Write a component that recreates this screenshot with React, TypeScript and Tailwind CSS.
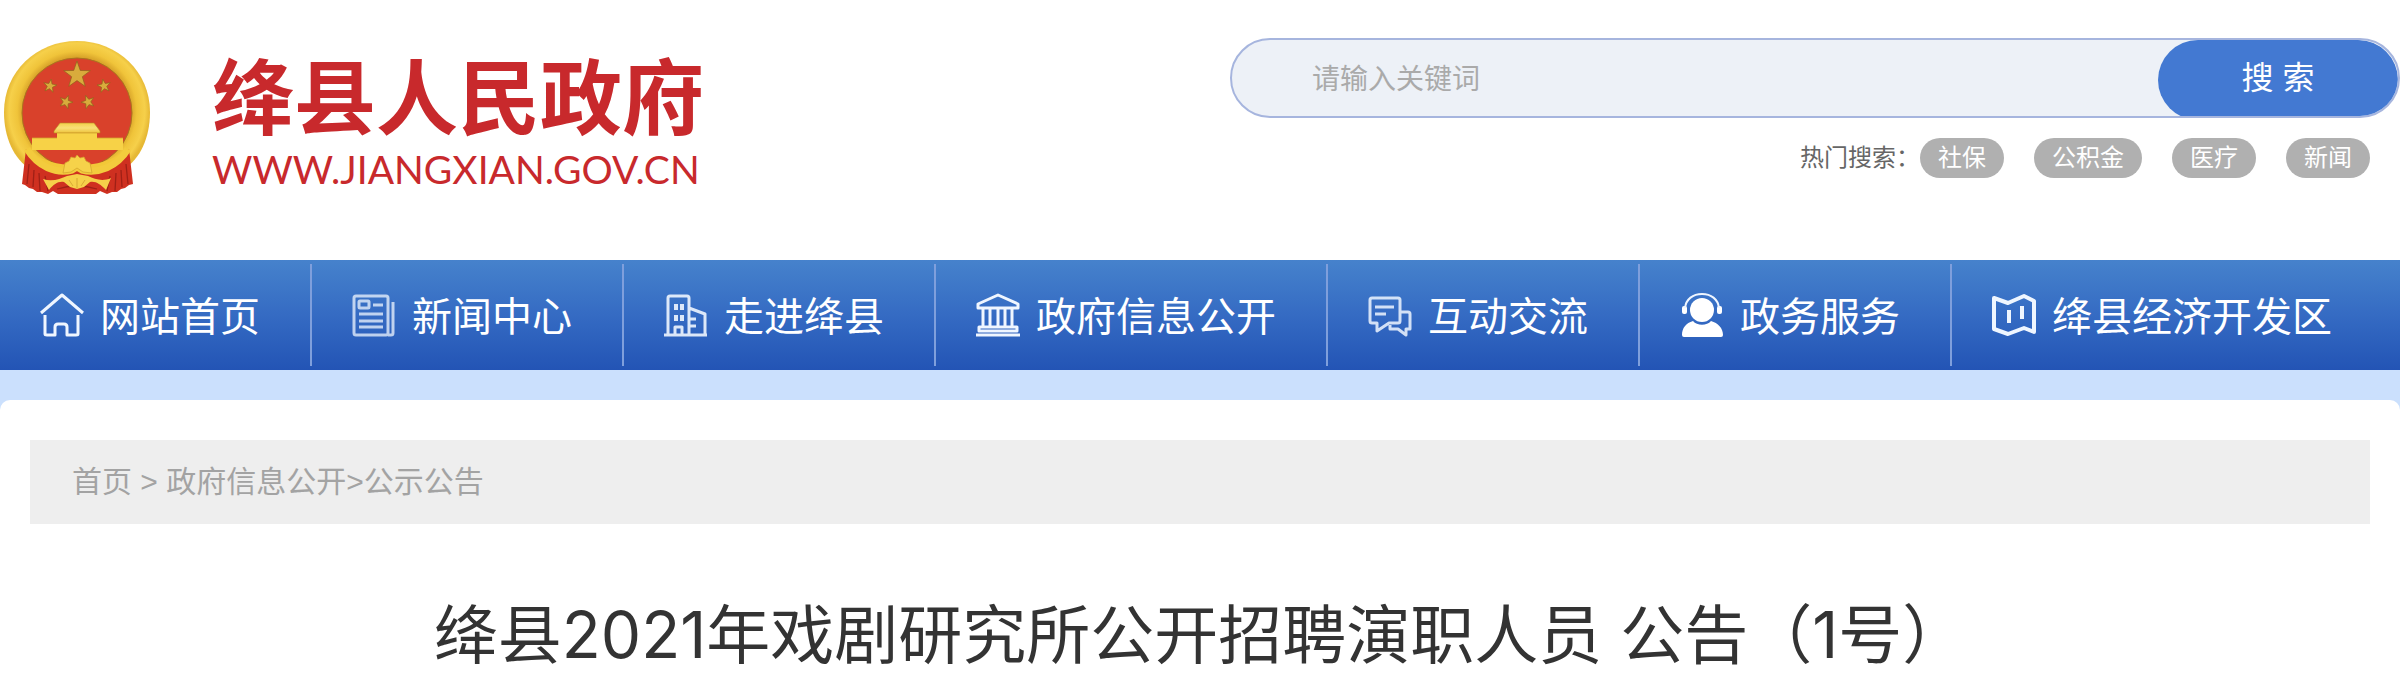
import type { ReactNode } from "react";

const hotWords = ["社保", "公积金", "医疗", "新闻"];

function star(cx: number, cy: number, r: number, turn = 0) {
  return Array.from({ length: 10 }, (_, i) => {
    const radius = i % 2 === 0 ? r : r * 0.4;
    const angle = ((i * 36 - 90 + turn) * Math.PI) / 180;
    return `${(cx + radius * Math.cos(angle)).toFixed(2)},${(cy + radius * Math.sin(angle)).toFixed(2)}`;
  }).join(" ");
}

function Emblem() {
  return (
    <svg className="h-[156px] w-[146px] shrink-0" viewBox="4 19 146 156" role="img" aria-label="国徽">
      <defs>
        <radialGradient id="ring" cx="77" cy="90" r="73" gradientUnits="userSpaceOnUse">
          <stop offset="0.74" stopColor="#d9a52a" />
          <stop offset="0.82" stopColor="#f0c43a" />
          <stop offset="0.93" stopColor="#f6d04a" />
          <stop offset="1" stopColor="#e6b834" />
        </radialGradient>
        <linearGradient id="roof" x1="0" y1="0" x2="0" y2="1">
          <stop offset="0" stopColor="#f3cf4a" />
          <stop offset="0.5" stopColor="#f8df78" />
          <stop offset="1" stopColor="#eec23a" />
        </linearGradient>
      </defs>
      <path
        d="M77 20C118 20 150 51 150 91C150 117 140 138 124 148L104 158H50L30 148C14 138 4 117 4 91C4 51 36 20 77 20Z"
        fill="url(#ring)"
      />
      <circle cx="77" cy="92" r="55" fill="#d9412b" stroke="#a8741f" strokeWidth="1" />
      <g fill="#d9ab3c" stroke="#8e641c" strokeWidth="0.7">
        <polygon points={star(77, 54, 14)} />
        <polygon points={star(50, 65, 7, 10)} />
        <polygon points={star(104, 65, 7, -10)} />
        <polygon points={star(66, 81, 7, 20)} />
        <polygon points={star(88, 81, 7, -20)} />
      </g>
      <path d="M60 102H94L100 110V112H54V110Z" fill="url(#roof)" stroke="#b98a25" strokeWidth="0.6" />
      <path d="M57 112H97V117H123V129H32V117H57Z" fill="#f7d247" />
      <path d="M32 117H57M97 117H123M57 112H97" stroke="#d3a22e" strokeWidth="0.8" />
      {/* lower ribbon and drapes */}
      <path d="M30 130C43 140 56 144 77 144S111 140 124 130L128 140C116 153 100 160 77 160S38 153 26 140Z" fill="#f2c838" />
      <path d="M26 128C34 145 50 151 68 153L77 148L86 153C104 151 120 145 129 128L133 163L129 164L125 167L121 168L117 171L112 171L107 173L100 170L96 173H58L53 170L48 173L42 171H37L33 168L29 167L25 164L22 163Z" fill="#cf3020" />
      <path d="M27 128C38 146 56 153 72 149L77 146L82 149C98 153 117 146 128 128" fill="none" stroke="#f3cb3d" strokeWidth="7" />
      <path
        d="M29 143L27 163M34 149L33 166M39 152L40 170M45 155L48 170M126 143L128 163M121 149L122 166M116 152L115 170M110 155L107 170M57 168Q77 162 97 168"
        stroke="#9f2016"
        strokeWidth="1.3"
        fill="none"
      />
      <path d="M63 152L65 142L69 140L71 136L75 137L77 134L80 137L84 136L86 140L90 142L92 152L83 151L77 147L71 151Z" fill="#f6d24a" stroke="#d2a02d" strokeWidth="0.7" />
      <path d="M43 158C52 161 60 158 67 155L77 153L88 155C95 158 102 161 111 157L106 169C100 163 96 160 90 161L84 166L77 168L70 166L64 161C58 160 54 163 49 169Z" fill="#f6d04a" />
      <path d="M69 159L73 165M77 157V167M85 159L81 165" stroke="#cf9f2f" strokeWidth="0.8" />
    </svg>
  );
}

function Icon({ children }: { children: ReactNode }) {
  return (
    <svg
      className="size-11 shrink-0 text-blue-50"
      viewBox="0 0 44 44"
      fill="none"
      stroke="currentColor"
      strokeWidth="3"
      strokeLinejoin="round"
      aria-hidden="true"
    >
      {children}
    </svg>
  );
}

const navItems = [
  {
    label: "网站首页",
    icon: <path d="M1 20L22 2L43 20M5 22V41Q5 42 7 42H15V34Q15 31 18 31H24Q27 31 27 34V42H36Q38 42 38 41V22" />,
  },
  {
    label: "新闻中心",
    icon: (
      <g opacity="0.75">
        <rect x="2" y="3" width="34" height="39" rx="2" />
        <path d="M36 42H39Q41 42 41 40V9" />
        <rect x="7" y="8" width="10" height="7" rx="1" />
        <path d="M21 12H31M7 21H31M7 28H31M7 34H31" />
      </g>
    ),
  },
  {
    label: "走进绛县",
    icon: (
      <g opacity="0.9">
        <path d="M0 42H43M4 42V5Q4 3 6 3H23Q25 3 25 5V42M25 15L41 21V42M11 42V34H18V42M25 26H32M25 33H32" />
        <path d="M12 11V17M18 11V17M12 22V28M18 22V28" strokeWidth="4" />
      </g>
    ),
  },
  {
    label: "政府信息公开",
    icon: (
      <path d="M2 15V11L22 2L42 11V15ZM7 16V33M14 16V33M22 16V33M29 16V33M36 16V33M3 34H41V38H3ZM0 42H44" />
    ),
  },
  {
    label: "互动交流",
    icon: (
      <path
        opacity="0.85"
        d="M4 5H30Q32 5 32 7V28Q32 30 30 30H21L9 38V30H4Q2 30 2 28V7Q2 5 4 5ZM7 14H26M7 21H18M33 19H40Q42 19 42 21V36H38V42L30 36H22V32"
      />
    ),
  },
  {
    label: "政务服务",
    icon: (
      <g>
        <g fill="white" stroke="none">
          <ellipse cx="22" cy="17" rx="12" ry="12" />
          <path d="M13 28C17 33 27 33 31 28C38 30 43 35 43 42Q43 44 41 44H4Q2 44 2 42C2 35 6 30 13 28Z" />
          <rect x="2" y="13" width="5" height="8" rx="2" />
          <rect x="37" y="13" width="5" height="8" rx="2" />
        </g>
        <path d="M5 15C6 6 13 1 22 1S38 6 39 15" strokeWidth="2" />
      </g>
    ),
  },
  {
    label: "绛县经济开发区",
    icon: <path d="M2 5L16 10L32 3L42 8V39L32 35L16 41L2 36ZM17 17V30M30 13V26" strokeWidth="4" />,
  },
];

function SearchBox() {
  return (
    <form
      className="flex h-20 overflow-hidden rounded-[40px] border-2 border-[#a6b5de] bg-[#edf1f7]"
      onSubmit={(event) => event.preventDefault()}
    >
      <input
        aria-label="关键词"
        className="min-w-0 flex-1 bg-transparent pt-1 pl-20 text-[28px] text-gray-700 outline-none placeholder:text-[#aaaaaa]"
        placeholder="请输入关键词"
        type="text"
      />
      <button className="h-20 w-60 rounded-[40px] bg-[#4379d2] pb-1 text-[32px] text-white" type="submit">
        搜 索
      </button>
    </form>
  );
}

export default function App() {
  return (
    <div className="bg-white font-['Liberation_Sans','Noto_Sans_CJK_SC',sans-serif]">
      <header className="flex h-[260px] items-start justify-between gap-10 pl-1">
        <a className="flex gap-[62px] pt-10 text-[#c8292c]" href="#">
          <Emblem />
          <div className="whitespace-nowrap">
            <div className="mt-3 text-[82px] leading-[96px] font-bold">绛县人民政府</div>
            <div className="font-['Lato',sans-serif] text-[39px] leading-[42px]">WWW.JIANGXIAN.GOV.CN</div>
          </div>
        </a>
        <div className="w-[1170px] pt-[38px]">
          <SearchBox />
          <div className="mt-5 flex justify-end pr-[30px] text-2xl leading-10">
            <span className="text-[#666666]">热门搜索：</span>
            <div className="flex gap-[30px]">
              {hotWords.map((word) => (
                <a className="rounded-[20px] bg-[#b0b0b0] px-[18px] text-white" href="#" key={word}>
                  {word}
                </a>
              ))}
            </div>
          </div>
        </div>
      </header>

      <nav className="flex h-[110px] items-center bg-linear-to-b from-[#4682cc] via-[#356bc3] to-[#2354b5]">
        {navItems.map((item) => (
          <a
            className="flex h-[102px] items-center gap-4 border-r-2 border-[#7f9fdc] pr-[50px] pl-10 text-[40px] whitespace-nowrap text-white last:border-r-0"
            href="#"
            key={item.label}
          >
            <Icon>{item.icon}</Icon>
            <span className="pt-1">{item.label}</span>
          </a>
        ))}
      </nav>

      <div className="bg-[#cbe0fd] pt-[30px]">
        <main className="rounded-t-[10px] bg-white px-[30px] pt-10">
          <div className="bg-[#eeeeee] px-[42px] text-[30px] leading-[84px] text-[#a3a3a3]">
            <a href="#">首页</a> {"> "}
            <a href="#">政府信息公开</a>
            {">"}
            <a href="#">公示公告</a>
          </div>
          <h1 className="pt-[68px] text-center font-['Inter','Noto_Sans_CJK_SC',sans-serif] text-[64px] leading-[86px] text-[#333333]">
            绛县2021年戏剧研究所公开招聘演职人员 公告（1号）
          </h1>
        </main>
      </div>
    </div>
  );
}
